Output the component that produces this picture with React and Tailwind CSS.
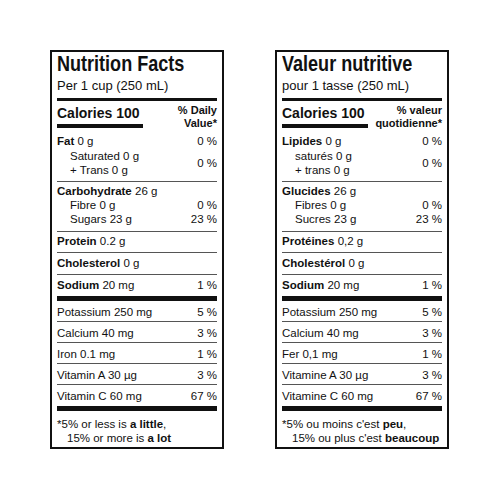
const labels = [
  {
    title: 'Nutrition Facts',
    serving: 'Per 1 cup (250 mL)',
    dv: ['% Daily', 'Value*'],
    fat: ['Fat', '0 g', '0 %'],
    sat: ['Saturated 0 g', '+ Trans 0 g', '0 %'],
    carb: ['Carbohydrate', '26 g'],
    fibre: ['Fibre 0 g', '0 %'],
    sugars: ['Sugars 23 g', '23 %'],
    single: [
      ['Protein', '0.2 g'],
      ['Cholesterol', '0 g'],
    ],
    sodium: ['Sodium', '20 mg', '1 %'],
    minerals: [
      ['Potassium 250 mg', '5 %'],
      ['Calcium 40 mg', '3 %'],
      ['Iron 0.1 mg', '1 %'],
      ['Vitamin A 30 µg', '3 %'],
      ['Vitamin C 60 mg', '67 %'],
    ],
    foot: ['5% or less is ', 'a little', '15% or more is ', 'a lot'],
  },
  {
    title: 'Valeur nutritive',
    serving: 'pour 1 tasse (250 mL)',
    dv: ['% valeur', 'quotidienne*'],
    fat: ['Lipides', '0 g', '0 %'],
    sat: ['saturés 0 g', '+ trans 0 g', '0 %'],
    carb: ['Glucides', '26 g'],
    fibre: ['Fibres 0 g', '0 %'],
    sugars: ['Sucres 23 g', '23 %'],
    single: [
      ['Protéines', '0,2 g'],
      ['Cholestérol', '0 g'],
    ],
    sodium: ['Sodium', '20 mg', '1 %'],
    minerals: [
      ['Potassium 250 mg', '5 %'],
      ['Calcium 40 mg', '3 %'],
      ['Fer 0,1 mg', '1 %'],
      ['Vitamine A 30 µg', '3 %'],
      ['Vitamine C 60 mg', '67 %'],
    ],
    foot: ["5% ou moins c'est ", 'peu', "15% ou plus c'est ", 'beaucoup'],
  },
];

function Rule({ className = '' }) {
  return <div className={`h-px bg-[#555] ${className}`} />;
}

function Label({ d }) {
  return (
    <div className="w-[174px] border-2 border-[#111] px-[5px] pb-[2px] flex flex-col text-[#111] font-['Liberation_Sans',Arial,sans-serif] text-[11.5px] leading-[14px]">
      {/* condensed headline: no narrow face installed, so squeeze the bold one */}
      <h1 className="h-[24px] whitespace-nowrap font-bold text-[22px] leading-[24px]">
        <span className="inline-block origin-left scale-x-[0.82]">{d.title}</span>
      </h1>
      <p className="mt-[1px] text-[13px] leading-[18px]">{d.serving}</p>
      <div className="mt-[3px] h-[3px] bg-[#111]" />

      <div className="flex justify-between">
        <div className="pt-[4px]">
          <div className="font-bold text-[14px] leading-[16px]">Calories 100</div>
          <div className="mt-[3px] h-[4px] w-[86px] bg-[#111]" />
        </div>
        <div className="pt-[3px] text-right font-bold text-[11px] leading-[13px]">
          <div>{d.dv[0]}</div>
          <div>{d.dv[1]}</div>
        </div>
      </div>

      <div className="pt-[4px]">
        <div className="flex justify-between">
          <span><b>{d.fat[0]}</b> {d.fat[1]}</span>
          <span>{d.fat[2]}</span>
        </div>
        <div className="mt-[1px] flex justify-between items-center">
          <div className="pl-[13px]">
            <div>{d.sat[0]}</div>
            <div>{d.sat[1]}</div>
          </div>
          <span>{d.sat[2]}</span>
        </div>
      </div>
      <Rule className="mt-[4px]" />

      <div className="pt-[2px]">
        <div><b>{d.carb[0]}</b> {d.carb[1]}</div>
        <div className="flex justify-between pl-[13px]">
          <span>{d.fibre[0]}</span>
          <span>{d.fibre[1]}</span>
        </div>
        <div className="flex justify-between pl-[13px]">
          <span>{d.sugars[0]}</span>
          <span>{d.sugars[1]}</span>
        </div>
      </div>
      <Rule className="mt-[5px]" />

      <div className="pt-[2px]"><b>{d.single[0][0]}</b> {d.single[0][1]}</div>
      <Rule className="mt-[4px]" />
      <div className="pt-[3px]"><b>{d.single[1][0]}</b> {d.single[1][1]}</div>
      <Rule className="mt-[4px]" />
      <div className="pt-[3px] flex justify-between">
        <span><b>{d.sodium[0]}</b> {d.sodium[1]}</span>
        <span>{d.sodium[2]}</span>
      </div>
      <div className="mt-[4px] h-[5px] bg-[#111]" />

      {d.minerals.map(([name, pct], i) => {
        const last = i === d.minerals.length - 1;
        return (
          <div key={name}>
            <div className={`flex justify-between pt-[4px] ${last ? 'pb-[3px]' : 'pb-[2px]'}`}>
              <span>{name}</span>
              <span>{pct}</span>
            </div>
            {!last && <Rule />}
          </div>
        );
      })}
      <div className="h-[5px] bg-[#111]" />

      <div className="pt-[6px] whitespace-nowrap">
        <div>*{d.foot[0]}<b>{d.foot[1]}</b>,</div>
        <div className="pl-[10px]">{d.foot[2]}<b>{d.foot[3]}</b></div>
      </div>
    </div>
  );
}

export default function App() {
  return (
    <div className="w-[500px] h-[500px] bg-white flex items-start gap-[51px] pl-[50px] pt-[50px]">
      {labels.map((d) => (
        <Label key={d.title} d={d} />
      ))}
    </div>
  );
}
